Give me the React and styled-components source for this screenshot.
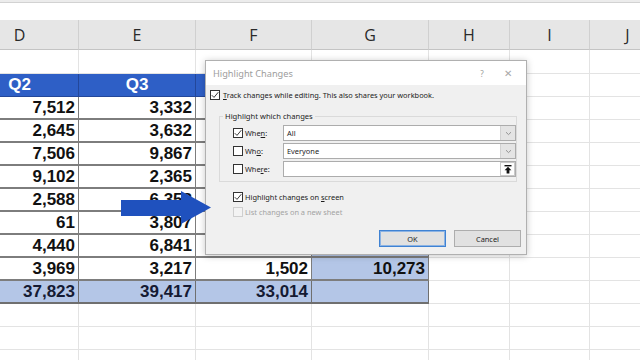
import React from "react"
import styled, { createGlobalStyle } from "styled-components"

const GlobalStyle = createGlobalStyle`
  html, body {
    margin: 0;
    padding: 0;
    background: #fff;
  }
  body {
    width: 640px;
    height: 360px;
    overflow: hidden;
  }
`

const COLS = "118px 117px 116px 117px 81px 80px 76px"
const letters = ["D", "E", "F", "G", "H", "I", "J"]

// F and G of the first rows sit under the dialog, so they stay blank here
const rows = [
  ["7,512", "3,332", "", ""],
  ["2,645", "3,632", "", ""],
  ["7,506", "9,867", "", ""],
  ["9,102", "2,365", "", ""],
  ["2,588", "6,358", "", ""],
  ["61", "3,807", "", ""],
  ["4,440", "6,841", "4,516", "17,624"],
  ["3,969", "3,217", "1,502", "10,273"],
]
const totals = ["37,823", "39,417", "33,014", ""]

function Sheet() {
  return (
    <Page>
      <FormulaEdge />
      <Gap />
      <Grid>
        <Row $h={30}>
          {letters.map((l) => (
            <HeadCell key={l}>{l}</HeadCell>
          ))}
        </Row>
        <Row $h={24}>
          {letters.map((l) => (
            <Cell key={l} />
          ))}
        </Row>
        <Row $h={23}>
          {["Q2", "Q3", "", ""].map((q, j) => (
            <Cell key={j} $bg="#2e5fc6" $line="#23479a" $color="#fff" $align="center">
              {q}
            </Cell>
          ))}
          {letters.slice(4).map((l) => (
            <Cell key={l} />
          ))}
        </Row>
        {rows.map((r, i) => (
          <Row $h={23} key={i}>
            {r.map((v, j) => (
              <Cell key={j} $line="#7d7d7d" $bw={2} $bg={j === 3 ? "#b4c6e7" : "#fff"}>
                {v}
              </Cell>
            ))}
            {letters.slice(4).map((l) => (
              <Cell key={l} />
            ))}
          </Row>
        ))}
        <Row $h={23}>
          {totals.map((v, j) => (
            <Cell key={j} $line="#6f6f6f" $bw={2} $bg="#b4c6e7" $color="#151a33">
              {v}
            </Cell>
          ))}
          {letters.slice(4).map((l) => (
            <Cell key={l} />
          ))}
        </Row>
        {[0, 1, 2].map((k) => (
          <Row $h={23} key={"b" + k}>
            {letters.map((l) => (
              <Cell key={l} />
            ))}
          </Row>
        ))}
      </Grid>
    </Page>
  )
}

const Check = () => (
  <svg width="8" height="8" viewBox="0 0 8 8">
    <path d="M0.8 4.2 L3 6.4 L7.3 1.2" fill="none" stroke="#222" strokeWidth="0.9" />
  </svg>
)

const Chevron = () => (
  <svg width="7" height="5" viewBox="0 0 7 5">
    <path d="M1 1.2 L3.5 3.6 L6 1.2" fill="none" stroke="#8a8a8a" strokeWidth="0.9" />
  </svg>
)

const CollapseIcon = () => (
  <svg width="8" height="9" viewBox="0 0 8 9">
    <rect x="0.5" y="0" width="7" height="1.4" fill="#111" />
    <path d="M4 1.8 L7.4 5.2 L5.4 5.2 L5.4 8.6 L2.6 8.6 L2.6 5.2 L0.6 5.2 Z" fill="#111" />
  </svg>
)

function HighlightDialog() {
  return (
    <Dialog>
      <TitleBar>
        <TitleText>Highlight Changes</TitleText>
        <Help>?</Help>
        <Close>✕</Close>
      </TitleBar>
      <Body>
        <OptionRow>
          <Box>
            <Check />
          </Box>
          <span>
            <U>T</U>rack changes while editing. This also shares your workbook.
          </span>
        </OptionRow>
        <Group>
          <Legend>Highlight which changes</Legend>
          <FieldRow>
            <Box>
              <Check />
            </Box>
            <span>
              Whe<U>n</U>:
            </span>
            <Select>
              <Value>All</Value>
              <DropBtn>
                <Chevron />
              </DropBtn>
            </Select>
          </FieldRow>
          <FieldRow>
            <Box />
            <span>
              Wh<U>o</U>:
            </span>
            <Select>
              <Value>Everyone</Value>
              <DropBtn>
                <Chevron />
              </DropBtn>
            </Select>
          </FieldRow>
          <FieldRow>
            <Box />
            <span>
              Whe<U>r</U>e:
            </span>
            <Select>
              <Value />
              <RefBtn>
                <CollapseIcon />
              </RefBtn>
            </Select>
          </FieldRow>
        </Group>
        <SubOption $top={9}>
          <Box>
            <Check />
          </Box>
          <span>
            Highlight changes on <U>s</U>creen
          </span>
        </SubOption>
        <SubOption $top={3} $disabled>
          <Box $disabled />
          <span>List changes on a new sheet</span>
        </SubOption>
        <Buttons>
          <Button $primary>OK</Button>
          <Button>Cancel</Button>
        </Buttons>
      </Body>
    </Dialog>
  )
}

const BlueArrow = () => (
  <Arrow width="90" height="34" viewBox="0 0 90 34">
    <path d="M0 9 L60 9 L60 0 L90 16.5 L60 33 L60 25 L0 25 Z" fill="#1f51be" />
  </Arrow>
)

export default function App() {
  return (
    <>
      <GlobalStyle />
      <Stage>
        <Sheet />
        <HighlightDialog />
        <BlueArrow />
      </Stage>
    </>
  )
}

const Stage = styled.div`
  position: relative;
  width: 640px;
  height: 360px;
  overflow: hidden;
  background: #fff;
`
const Page = styled.div`
  width: 640px;
  height: 360px;
  overflow: hidden;
`
const FormulaEdge = styled.div`
  height: 2px;
  background: #ececec;
  border-bottom: 1px solid #d2d2d2;
`
const Gap = styled.div`
  height: 17px;
  background: #fff;
`
const Grid = styled.div`
  margin-left: -39px;
  display: flex;
  flex-direction: column;
`
const Row = styled.div`
  display: grid;
  grid-template-columns: ${COLS};
  height: ${(p) => p.$h}px;
`
const HeadCell = styled.div`
  box-sizing: border-box;
  display: flex;
  align-items: center;
  justify-content: center;
  background: #e6e6e6;
  border-right: 1px solid #d0d0d0;
  border-bottom: 1px solid #c4c4c4;
  font-family: "Open Sans", "Noto Sans", sans-serif;
  font-size: 16px;
  color: #2a2a2a;
`
const Cell = styled.div`
  box-sizing: border-box;
  display: flex;
  align-items: center;
  justify-content: ${(p) => (p.$align === "center" ? "center" : "flex-end")};
  padding: 0 3px;
  background: ${(p) => p.$bg || "#fff"};
  border-right: 1px solid ${(p) => p.$line || "#e3e3e3"};
  border-bottom: ${(p) => p.$bw || 1}px solid ${(p) => p.$line || "#e3e3e3"};
  font-family: "Liberation Sans", Arial, sans-serif;
  font-weight: bold;
  font-size: 17px;
  color: ${(p) => p.$color || "#111"};
  white-space: nowrap;
  overflow: hidden;
`

const Dialog = styled.div`
  position: absolute;
  left: 205px;
  top: 60px;
  width: 322px;
  height: 195px;
  box-sizing: border-box;
  border: 1px solid #b0b0b0;
  background: #f0f0f0;
  box-shadow: 0 1px 7px rgba(0, 0, 0, 0.22);
  display: flex;
  flex-direction: column;
  font-family: "Noto Sans", "Open Sans", sans-serif;
  font-size: 7.4px;
  color: #1c1c1c;
`
const TitleBar = styled.div`
  height: 24px;
  flex-shrink: 0;
  display: flex;
  align-items: center;
  padding-left: 7px;
  background: #fff;
  color: #9d9d9d;
  font-size: 9.2px;
`
const TitleText = styled.div`
  flex: 1;
`
const Help = styled.span`
  width: 8px;
  margin-right: 16px;
  font-size: 8px;
  text-align: center;
`
const Close = styled.span`
  width: 12px;
  margin-right: 12px;
  font-size: 10px;
  text-align: center;
  color: #a8a8a8;
`
const Body = styled.div`
  flex: 1;
  display: flex;
  flex-direction: column;
  padding: 4px 5px 0 4px;
`
const U = styled.span`
  text-decoration: underline;
`
const OptionRow = styled.div`
  display: flex;
  align-items: center;
  gap: 3px;
  height: 12px;
`
const Box = styled.span`
  box-sizing: border-box;
  width: 10px;
  height: 10px;
  flex-shrink: 0;
  display: inline-flex;
  align-items: center;
  justify-content: center;
  background: ${(p) => (p.$disabled ? "#f3f3f3" : "#fff")};
  border: 1px solid ${(p) => (p.$disabled ? "#cfcfcf" : "#333")};
`
const Group = styled.fieldset`
  margin: 10px 4px 0 9px;
  padding: 4px 0 4px 0;
  min-width: 0;
  border: 1px solid #dadada;
  display: flex;
  flex-direction: column;
  gap: 2px;
`
const Legend = styled.legend`
  margin-left: 3px;
  padding: 0 2px;
  line-height: 10px;
  font-size: 7.6px;
`
const FieldRow = styled.div`
  display: grid;
  grid-template-columns: 10px 36px 1fr;
  column-gap: 2px;
  align-items: center;
  height: 16px;
  padding-left: 13px;
`
const Select = styled.div`
  box-sizing: border-box;
  height: 16px;
  display: flex;
  align-items: center;
  background: #fff;
  border: 1px solid #acacac;
  padding-left: 3px;
`
const Value = styled.span`
  flex: 1;
`
const DropBtn = styled.span`
  box-sizing: border-box;
  width: 15px;
  height: 14px;
  display: flex;
  align-items: center;
  justify-content: center;
  background: #e4e4e4;
  border-left: 1px solid #d2d2d2;
`
const RefBtn = styled(DropBtn)`
  background: #fdfdfd;
  border: 1px solid #c9c9c9;
`
const SubOption = styled(OptionRow)`
  margin-top: ${(p) => p.$top}px;
  margin-left: 23px;
  gap: 2px;
  color: ${(p) => (p.$disabled ? "#a3a3a3" : "inherit")};
`
const Buttons = styled.div`
  margin-top: 12px;
  display: flex;
  justify-content: flex-end;
  gap: 8px;
`
const Button = styled.div`
  box-sizing: border-box;
  width: 67px;
  height: 17px;
  display: flex;
  align-items: center;
  justify-content: center;
  background: #e1e1e1;
  border: 1px solid ${(p) => (p.$primary ? "#3f82d3" : "#adadad")};
  box-shadow: ${(p) => (p.$primary ? "inset 0 0 0 1px #8cb3e3" : "none")};
`
const Arrow = styled.svg`
  position: absolute;
  left: 121px;
  top: 191px;
  z-index: 2;
`
